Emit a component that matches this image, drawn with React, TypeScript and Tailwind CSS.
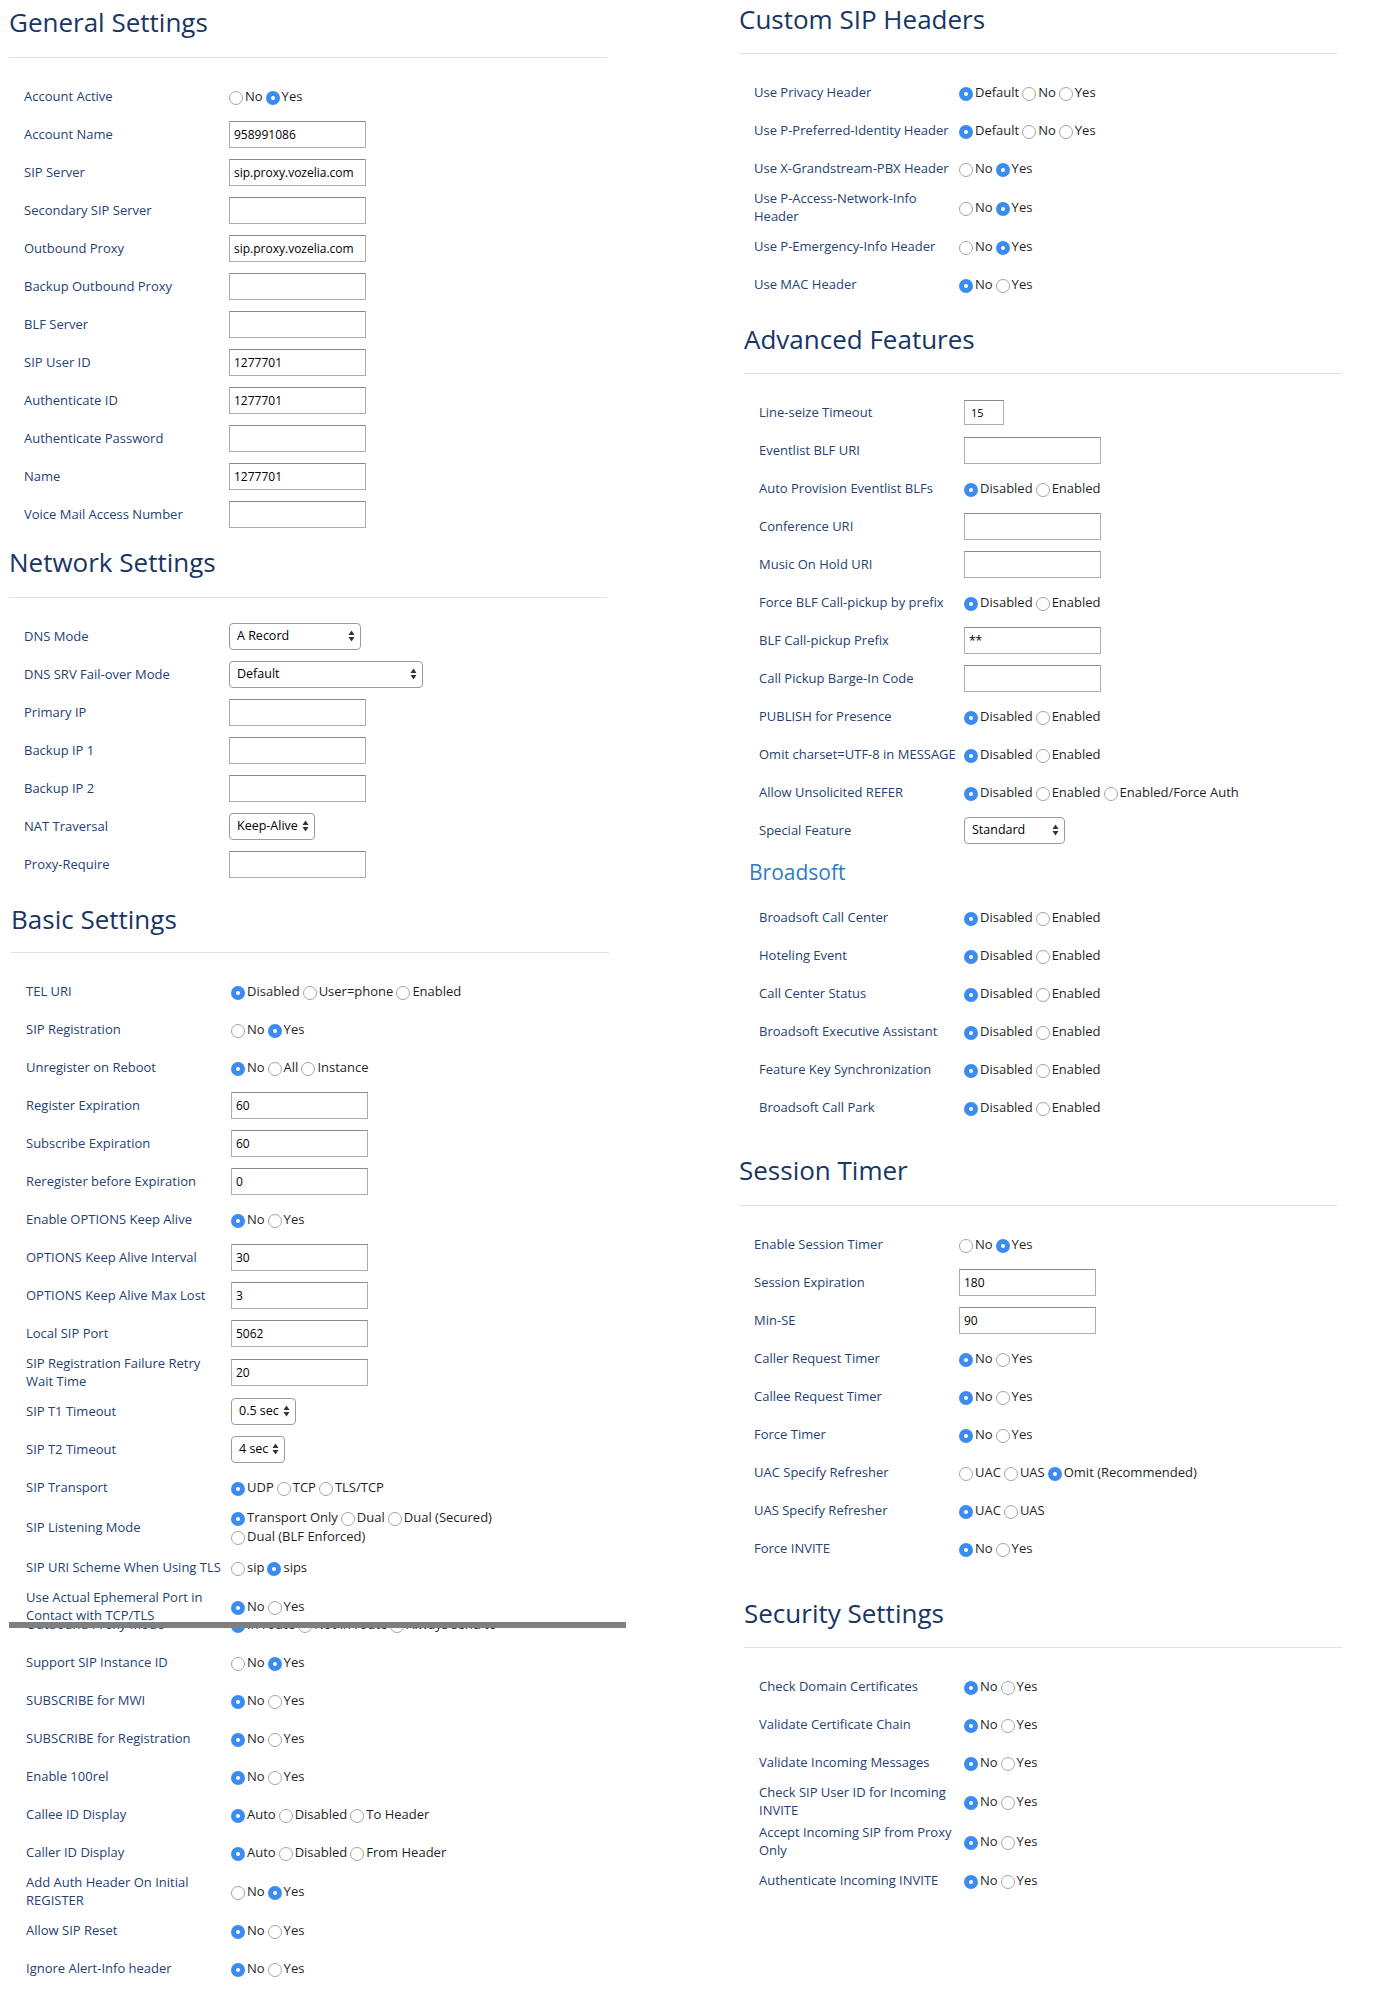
import React from 'react';

type Field =
  | { kind: 'radio'; label: string; opts: string[]; on: number }
  | { kind: 'input'; label: string; value?: string; small?: boolean }
  | { kind: 'select'; label: string; value: string; w: string };

const general: Field[] = [
  { kind: 'radio', label: 'Account Active', opts: ['No', 'Yes'], on: 1 },
  { kind: 'input', label: 'Account Name', value: '958991086' },
  { kind: 'input', label: 'SIP Server', value: 'sip.proxy.vozelia.com' },
  { kind: 'input', label: 'Secondary SIP Server' },
  { kind: 'input', label: 'Outbound Proxy', value: 'sip.proxy.vozelia.com' },
  { kind: 'input', label: 'Backup Outbound Proxy' },
  { kind: 'input', label: 'BLF Server' },
  { kind: 'input', label: 'SIP User ID', value: '1277701' },
  { kind: 'input', label: 'Authenticate ID', value: '1277701' },
  { kind: 'input', label: 'Authenticate Password' },
  { kind: 'input', label: 'Name', value: '1277701' },
  { kind: 'input', label: 'Voice Mail Access Number' },
];

const network: Field[] = [
  { kind: 'select', label: 'DNS Mode', value: 'A Record', w: 'w-[132px]' },
  { kind: 'select', label: 'DNS SRV Fail-over Mode', value: 'Default', w: 'w-[194px]' },
  { kind: 'input', label: 'Primary IP' },
  { kind: 'input', label: 'Backup IP 1' },
  { kind: 'input', label: 'Backup IP 2' },
  { kind: 'select', label: 'NAT Traversal', value: 'Keep-Alive', w: 'w-[86px]' },
  { kind: 'input', label: 'Proxy-Require' },
];

const basicTop: Field[] = [
  { kind: 'radio', label: 'TEL URI', opts: ['Disabled', 'User=phone', 'Enabled'], on: 0 },
  { kind: 'radio', label: 'SIP Registration', opts: ['No', 'Yes'], on: 1 },
  { kind: 'radio', label: 'Unregister on Reboot', opts: ['No', 'All', 'Instance'], on: 0 },
  { kind: 'input', label: 'Register Expiration', value: '60' },
  { kind: 'input', label: 'Subscribe Expiration', value: '60' },
  { kind: 'input', label: 'Reregister before Expiration', value: '0' },
  { kind: 'radio', label: 'Enable OPTIONS Keep Alive', opts: ['No', 'Yes'], on: 0 },
  { kind: 'input', label: 'OPTIONS Keep Alive Interval', value: '30' },
  { kind: 'input', label: 'OPTIONS Keep Alive Max Lost', value: '3' },
  { kind: 'input', label: 'Local SIP Port', value: '5062' },
  { kind: 'input', label: 'SIP Registration Failure Retry Wait Time', value: '20' },
  { kind: 'select', label: 'SIP T1 Timeout', value: '0.5 sec', w: 'w-[65px]' },
  { kind: 'select', label: 'SIP T2 Timeout', value: '4 sec', w: 'w-[54px]' },
  { kind: 'radio', label: 'SIP Transport', opts: ['UDP', 'TCP', 'TLS/TCP'], on: 0 },
  { kind: 'radio', label: 'SIP Listening Mode', opts: ['Transport Only', 'Dual', 'Dual (Secured)', 'Dual (BLF Enforced)'], on: 0 },
  { kind: 'radio', label: 'SIP URI Scheme When Using TLS', opts: ['sip', 'sips'], on: 1 },
];

const basicBottom: Field[] = [
  { kind: 'radio', label: 'Support SIP Instance ID', opts: ['No', 'Yes'], on: 1 },
  { kind: 'radio', label: 'SUBSCRIBE for MWI', opts: ['No', 'Yes'], on: 0 },
  { kind: 'radio', label: 'SUBSCRIBE for Registration', opts: ['No', 'Yes'], on: 0 },
  { kind: 'radio', label: 'Enable 100rel', opts: ['No', 'Yes'], on: 0 },
  { kind: 'radio', label: 'Callee ID Display', opts: ['Auto', 'Disabled', 'To Header'], on: 0 },
  { kind: 'radio', label: 'Caller ID Display', opts: ['Auto', 'Disabled', 'From Header'], on: 0 },
  { kind: 'radio', label: 'Add Auth Header On Initial REGISTER', opts: ['No', 'Yes'], on: 1 },
  { kind: 'radio', label: 'Allow SIP Reset', opts: ['No', 'Yes'], on: 0 },
  { kind: 'radio', label: 'Ignore Alert-Info header', opts: ['No', 'Yes'], on: 0 },
];

const customHeaders: Field[] = [
  { kind: 'radio', label: 'Use Privacy Header', opts: ['Default', 'No', 'Yes'], on: 0 },
  { kind: 'radio', label: 'Use P-Preferred-Identity Header', opts: ['Default', 'No', 'Yes'], on: 0 },
  { kind: 'radio', label: 'Use X-Grandstream-PBX Header', opts: ['No', 'Yes'], on: 1 },
  { kind: 'radio', label: 'Use P-Access-Network-Info Header', opts: ['No', 'Yes'], on: 1 },
  { kind: 'radio', label: 'Use P-Emergency-Info Header', opts: ['No', 'Yes'], on: 1 },
  { kind: 'radio', label: 'Use MAC Header', opts: ['No', 'Yes'], on: 0 },
];

const disEn = ['Disabled', 'Enabled'];

const advanced: Field[] = [
  { kind: 'input', label: 'Line-seize Timeout', value: '15', small: true },
  { kind: 'input', label: 'Eventlist BLF URI' },
  { kind: 'radio', label: 'Auto Provision Eventlist BLFs', opts: disEn, on: 0 },
  { kind: 'input', label: 'Conference URI' },
  { kind: 'input', label: 'Music On Hold URI' },
  { kind: 'radio', label: 'Force BLF Call-pickup by prefix', opts: disEn, on: 0 },
  { kind: 'input', label: 'BLF Call-pickup Prefix', value: '**' },
  { kind: 'input', label: 'Call Pickup Barge-In Code' },
  { kind: 'radio', label: 'PUBLISH for Presence', opts: disEn, on: 0 },
  { kind: 'radio', label: 'Omit charset=UTF-8 in MESSAGE', opts: disEn, on: 0 },
  { kind: 'radio', label: 'Allow Unsolicited REFER', opts: ['Disabled', 'Enabled', 'Enabled/Force Auth'], on: 0 },
  { kind: 'select', label: 'Special Feature', value: 'Standard', w: 'w-[101px]' },
];

const broadsoft: Field[] = [
  'Broadsoft Call Center',
  'Hoteling Event',
  'Call Center Status',
  'Broadsoft Executive Assistant',
  'Feature Key Synchronization',
  'Broadsoft Call Park',
].map((label) => ({ kind: 'radio', label, opts: disEn, on: 0 }) as Field);

const sessionTimer: Field[] = [
  { kind: 'radio', label: 'Enable Session Timer', opts: ['No', 'Yes'], on: 1 },
  { kind: 'input', label: 'Session Expiration', value: '180' },
  { kind: 'input', label: 'Min-SE', value: '90' },
  { kind: 'radio', label: 'Caller Request Timer', opts: ['No', 'Yes'], on: 0 },
  { kind: 'radio', label: 'Callee Request Timer', opts: ['No', 'Yes'], on: 0 },
  { kind: 'radio', label: 'Force Timer', opts: ['No', 'Yes'], on: 0 },
  { kind: 'radio', label: 'UAC Specify Refresher', opts: ['UAC', 'UAS', 'Omit (Recommended)'], on: 2 },
  { kind: 'radio', label: 'UAS Specify Refresher', opts: ['UAC', 'UAS'], on: 0 },
  { kind: 'radio', label: 'Force INVITE', opts: ['No', 'Yes'], on: 0 },
];

const security: Field[] = [
  'Check Domain Certificates',
  'Validate Certificate Chain',
  'Validate Incoming Messages',
  'Check SIP User ID for Incoming INVITE',
  'Accept Incoming SIP from Proxy Only',
  'Authenticate Incoming INVITE',
].map((label) => ({ kind: 'radio', label, opts: ['No', 'Yes'], on: 0 }) as Field);

const Radio = ({ checked }: { checked: boolean }) =>
  checked ? (
    <span className="mt-[3px] mr-[2px] flex h-[14px] w-[14px] shrink-0 items-center justify-center rounded-full bg-[#3b8bf0]">
      <span className="h-[4px] w-[4px] rounded-full bg-white" />
    </span>
  ) : (
    <span className="mt-[3px] mr-[2px] h-[14px] w-[14px] shrink-0 rounded-full border border-[#a5a5a5] bg-white" />
  );

const RadioGroup = ({ opts, on }: { opts: string[]; on: number }) => (
  <div className="flex flex-wrap items-center gap-x-[3px] text-[13px] leading-[19px] text-[#1f1f1f]">
    {opts.map((o, i) => (
      <span key={o} className="flex h-[19px] items-center whitespace-nowrap">
        <Radio checked={i === on} />
        {o}
      </span>
    ))}
  </div>
);

const TextBox = ({ value = '', small }: { value?: string; small?: boolean }) => (
  <input
    type="text"
    readOnly
    value={value}
    className={
      small
        ? 'block h-[25px] w-[40px] border border-[#adadad] border-t-[#8a8a8a] bg-white pl-[6px] text-[11px] text-black outline-none'
        : 'block h-[27px] w-[137px] border border-[#adadad] border-t-[#8a8a8a] bg-white pl-[4px] text-[12px] text-black outline-none'
    }
  />
);

// up/down arrows drawn at the right end of a dropdown
const Arrows = () => (
  <svg width="7" height="12" viewBox="0 0 7 12" className="shrink-0">
    <path d="M0.5 5 L3.5 0.5 L6.5 5 Z" fill="#333" />
    <path d="M0.5 7 L6.5 7 L3.5 11.5 Z" fill="#333" />
  </svg>
);

const Dropdown = ({ value, w }: { value: string; w: string }) => (
  <div
    className={`${w} flex h-[27px] items-center justify-between rounded-[4px] border border-[#9a9a9a] bg-white pl-[7px] pr-[5px] text-[12.5px] text-black`}
  >
    <span className="whitespace-nowrap">{value}</span>
    <Arrows />
  </div>
);

const Row = ({ f }: { f: Field }) => (
  <div className="flex min-h-[38px] items-center pt-[1px] pb-[3px]">
    <div className="w-[220px] shrink-0 pl-[15px] pr-[5px] text-[13px] leading-[18px] text-[#254273]">{f.label}</div>
    <div className="min-w-0 flex-1">
      {f.kind === 'radio' && <RadioGroup opts={f.opts} on={f.on} />}
      {f.kind === 'input' && <TextBox value={f.value} small={f.small} />}
      {f.kind === 'select' && <Dropdown value={f.value} w={f.w} />}
    </div>
  </div>
);

const Heading = ({ title, gap }: { title: string; gap: string }) => (
  <>
    <h2 className="text-[26px] leading-[30px] font-normal text-[#183664]">{title}</h2>
    <div className={`${gap} h-px w-[598px] bg-[#e2e2e2]`} />
  </>
);

const Rows = ({ fields }: { fields: Field[] }) => (
  <div>
    {fields.map((f) => (
      <Row key={f.label} f={f} />
    ))}
  </div>
);

export default function App() {
  return (
    <div className="min-h-[2000px] bg-white font-['Open_Sans',sans-serif]">
      <div className="flex items-start">
        {/* left column */}
        <div className="ml-[9px] w-[617px] shrink-0">
          <section className="pt-[7px]">
            <Heading title="General Settings" gap="mt-[20px]" />
            <div className="mt-[20px]">
              <Rows fields={general} />
            </div>
          </section>

          <section className="mt-[13px]">
            <Heading title="Network Settings" gap="mt-[20px]" />
            <div className="mt-[20px]">
              <Rows fields={network} />
            </div>
          </section>

          <section className="mt-[20px]">
            <div className="pl-[2px]">
              <Heading title="Basic Settings" gap="mt-[18px]" />
              <div className="mt-[20px]">
                <Rows fields={basicTop} />
                <div className="h-[35px] overflow-hidden">
                  <Row f={{ kind: 'radio', label: 'Use Actual Ephemeral Port in Contact with TCP/TLS', opts: ['No', 'Yes'], on: 0 }} />
                </div>
              </div>
            </div>
            <div className="h-[6px] w-[617px] bg-[#7f7f7f]" />
            <div className="pl-[2px]">
              <div className="h-[16px] overflow-hidden">
                <div className="-mt-[22px]">
                  <Row f={{ kind: 'radio', label: 'Outbound Proxy Mode', opts: ['In route', 'Not in route', 'Always send to'], on: 0 }} />
                </div>
              </div>
              <Rows fields={basicBottom} />
            </div>
          </section>
        </div>

        {/* right column */}
        <div className="ml-[113px] w-[610px] shrink-0">
          <section className="pt-[4px]">
            <Heading title="Custom SIP Headers" gap="mt-[19px]" />
            <div className="mt-[20px]">
              <Rows fields={customHeaders} />
            </div>
          </section>

          <section className="mt-[20px] ml-[5px]">
            <Heading title="Advanced Features" gap="mt-[19px]" />
            <div className="mt-[20px]">
              <Rows fields={advanced} />
            </div>
            <h3 className="mt-[10px] mb-[15px] pl-[5px] text-[21px] leading-[24px] font-normal text-[#2f7cc6]">Broadsoft</h3>
            <Rows fields={broadsoft} />
          </section>

          <section className="mt-[28px]">
            <Heading title="Session Timer" gap="mt-[20px]" />
            <div className="mt-[20px]">
              <Rows fields={sessionTimer} />
            </div>
          </section>

          <section className="mt-[30px] ml-[5px]">
            <Heading title="Security Settings" gap="mt-[19px]" />
            <div className="mt-[20px]">
              <Rows fields={security} />
            </div>
          </section>
        </div>
      </div>
    </div>
  );
}
